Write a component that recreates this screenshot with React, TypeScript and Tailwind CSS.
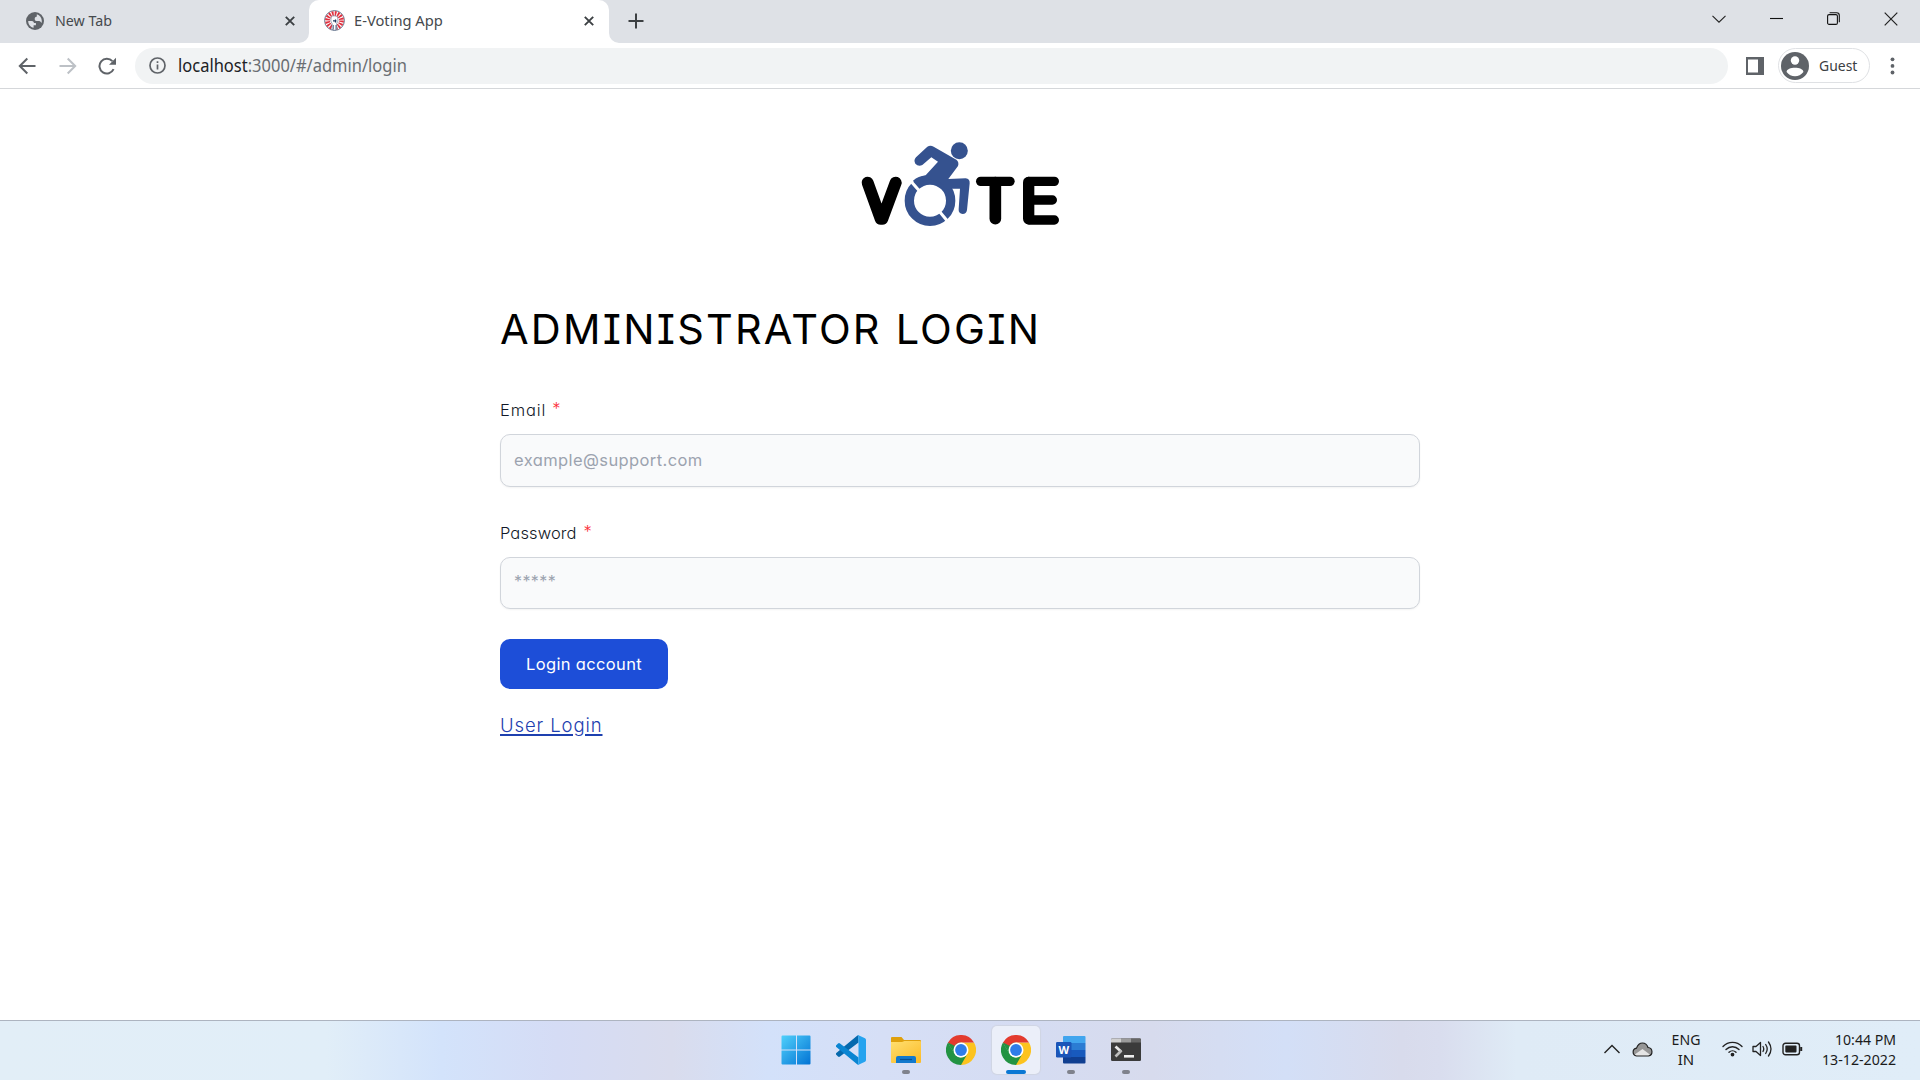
import React from "react";

const sen = "font-['Inter','Lato',sans-serif] [font-feature-settings:'cv08','cv11']";

function Close() {
  return (
    <svg width="10" height="10" viewBox="0 0 10 10" fill="none" stroke="#3c4043" strokeWidth="1.9">
      <path d="M.8.8 9.2 9.2M9.2.8.8 9.2" />
    </svg>
  );
}

function Favicon() {
  return (
    <svg width="21" height="21" viewBox="0 0 21 21">
      <circle cx="10.5" cy="10.5" r="9.9" fill="#fff" stroke="#52647f" strokeWidth=".9" />
      <circle cx="10.5" cy="10.5" r="7" fill="none" stroke="#e0313f" strokeWidth="4.8" strokeDasharray="1.7 1.05" />
      <path d="M7.2 7c.8-1.600 5.200-1.600 6.400.2l.4 3.800-1.400 2.600.4 5.600-2.500 1-2.600-1 .3-5.400-1.400-2.800z" fill="#fff" stroke="#5b6d8c" strokeWidth=".6" />
      <path d="M9 10.800h3.400M11.500 9.500v3" stroke="#1d355c" strokeWidth="1.200" />
      <path d="M9.300 15v4.300M12 15v4.300" stroke="#2a426a" strokeWidth=".8" />
    </svg>
  );
}

function TitleBar() {
  return (
    <div className="flex h-[43px] bg-[#dee1e6] text-[#45494d]">
      <div className="flex w-[309px] items-center pb-0.5 pl-[26px] pr-[14px]">
        <svg width="18" height="18" viewBox="0 0 18 18">
          <circle cx="9" cy="9" r="9" fill="#5f6368" />
          <path d="M2.2 8.9h3.5c1.8 0 2.2 1 2.2 2.2h2v2.2H7.6v2.4C4.4 15 2.2 12.300 2.200 8.900zM10.800 2.300c3 .8 5 3.600 5 6.700 0 .7-.1 1.300-.3 1.900-.8-1.600-2.100-1.900-3.500-1.900h-1.500c-1.200 0-1.800-.8-1.800-2.200 0-1.500 1-2 2.100-2z" fill="#dee1e6" />
        </svg>
        <span className="ml-[11px] flex-1 origin-left scale-x-[.95] text-[15px]">New Tab</span>
        <Close />
      </div>
      <div className="relative flex w-[300px] items-center rounded-t-[10px] bg-white pb-0.5 pl-[15px] pr-[15px]">
        <Favicon />
        <span className="ml-[9px] flex-1 origin-left scale-x-[.98] text-[15px]">E-Voting App</span>
        <Close />
        <svg className="absolute -left-[10px] bottom-0" width="10" height="10"><path d="M10 0v10H0A10 10 0 0 0 10 0z" fill="#fff" /></svg>
        <svg className="absolute -right-[10px] bottom-0" width="10" height="10"><path d="M0 0v10h10A10 10 0 0 1 0 0z" fill="#fff" /></svg>
      </div>
      <div className="flex flex-1 items-center pb-[1px] pl-[19px]">
        <svg width="16" height="16" viewBox="0 0 16 16" stroke="#3c4043" strokeWidth="2"><path d="M8 .5v15M.5 8h15" /></svg>
      </div>
      <div className="flex items-center gap-[44px] pb-[6px] pr-[22px]">
        <svg width="14" height="8" viewBox="0 0 14 8" fill="none" stroke="#222" strokeWidth="1.1"><path d="M.5.8 7 7.200 13.500.8" /></svg>
        <svg width="13" height="13" viewBox="0 0 13 13" stroke="#111" strokeWidth="1.1"><path d="M0 6.500h13" /></svg>
        <svg width="13" height="13" viewBox="0 0 13 13" fill="none" stroke="#111" strokeWidth="1.100"><rect x=".6" y="2.600" width="9.800" height="9.800" rx="1.500" /><path d="M2.600.7h7a2.700 2.700 0 0 1 2.700 2.700v6.800" /></svg>
        <svg width="14" height="14" viewBox="0 0 14 14" stroke="#222" strokeWidth="1.200"><path d="m.7.7 12.600 12.600M13.300.7.7 13.300" /></svg>
      </div>
    </div>
  );
}

function Toolbar() {
  return (
    <div className="flex h-[46px] items-center border-b border-[#d5d7da] bg-white pl-[18px] pr-[25px]">
      <svg width="18" height="18" viewBox="0 0 18 18" fill="none" stroke="#5f6368" strokeWidth="2"><path d="M17.500 9H2M9.300 1.500 1.800 9l7.500 7.500" /></svg>
      <svg className="ml-[23px]" width="18" height="18" viewBox="0 0 18 18" fill="none" stroke="#bdc1c6" strokeWidth="2"><path d="M.5 9H16M8.700 1.500 16.200 9l-7.500 7.500" /></svg>
      <svg className="ml-[21px]" width="19" height="18" viewBox="0 0 19 18"><path d="M15.600 12.200A7.400 7.400 0 1 1 14.400 4.200" fill="none" stroke="#5f6368" strokeWidth="2" /><path d="M18 .8v7h-7z" fill="#5f6368" /></svg>
      <div className="ml-[18px] flex h-9 w-[1593px] shrink-0 items-center rounded-full bg-[#f1f3f4] pl-[14px]">
        <svg width="17" height="17" viewBox="0 0 17 17" fill="none" stroke="#5f6368" strokeWidth="1.700"><circle cx="8.500" cy="8.500" r="7.500" /><path d="M8.500 7.500v5M8.500 4.200v1.800" /></svg>
        <span className="ml-[12px] origin-left scale-x-[.916] text-[18px] text-[#6a6e72]"><span className="text-[#202124]">localhost</span>:3000/#/admin/login</span>
      </div>
      <svg className="ml-[18px] shrink-0" width="18" height="18" viewBox="0 0 18 18"><path fillRule="evenodd" d="M0 0h18v18H0zM2 2.500v13h10v-13z" fill="#5f6368" /></svg>
      <div className="ml-[14px] flex h-[35px] w-[92px] shrink-0 items-center rounded-full border border-[#dfe1e4] pl-[2px]">
        <svg width="28" height="28" viewBox="0 0 28 28"><circle cx="14" cy="14" r="14" fill="#5f6368" /><circle cx="14" cy="8.500" r="4.200" fill="#fff" /><path d="M5.600 20c0-5.600 16.800-5.600 16.800 0-4 5.600-12.800 5.600-16.800 0z" fill="#fff" /></svg>
        <span className="ml-[10px] origin-left scale-x-[.93] pb-px text-[15px] text-[#3c4043]">Guest</span>
      </div>
      <svg className="ml-auto" width="5" height="18" viewBox="0 0 5 18" fill="#5f6368"><circle cx="2.500" cy="2.300" r="1.900" /><circle cx="2.500" cy="8.900" r="1.900" /><circle cx="2.500" cy="15.500" r="1.900" /></svg>
    </div>
  );
}

function VoteLogo() {
  return (
    <svg className="mx-auto block" width="240" height="110" viewBox="0 0 720 330" fill="none" strokeLinecap="round" strokeLinejoin="round">
      <path d="M83 158 122 266h5L167 158" stroke="#000" strokeWidth="36" />
      <path d="M422 154h88" stroke="#000" strokeWidth="28" />
      <path d="M466 158v108" stroke="#000" strokeWidth="35" />
      <path d="M643 154h-76M567 158v108M643 270h-76M567 210h70" stroke="#000" strokeWidth="28" />
      <path d="M566 157v109" stroke="#000" strokeWidth="34" />
      <g>
        <circle cx="270" cy="212" r="62" stroke="#35528f" strokeWidth="28" />
        <circle cx="358" cy="62" r="25.500" fill="#35528f" />
        <path d="M262 50Q271 44 281 50L349 89Q358 96 354 108L325 147L377 145Q390 147 389 160L381 240Q379 252 368 252Q355 251 356 238L360 176H335L322 178Q300 149 270 149Q245 150 233 168L219 152Q235 139 257 136L294 95L274 82L247 105Q235 111 226 101Q220 90 228 82Z" fill="#35528f" />
      </g>
      <path d="m214 155 27 31M299 245l25 30" stroke="#fff" strokeWidth="9" strokeLinecap="butt" />
    </svg>
  );
}

function Field({ label, labelClass, starClass, inputClass, placeholder, type }: { label: string; labelClass: string; starClass: string; inputClass: string; placeholder: string; type: string }) {
  return (
    <div>
      <label className="flex h-6 items-center text-[16.5px] font-[360] text-[#111827]">
        <span className={labelClass}>{label}</span><span className={starClass}>*</span>
      </label>
      <input
        type={type}
        placeholder={placeholder}
        className={`${inputClass} mt-3 block w-full rounded-[10px] border border-[#d1d5db] bg-[#f9fafb] px-[13px] font-[380] shadow-xs placeholder:text-[#9ca3af]`}
      />
    </div>
  );
}

function ChromeIcon() {
  return (
    <svg width="30" height="30" viewBox="0 0 30 30">
      <path d="M15 15V7.500h13A15 15 0 0 1 15 30z" fill="#fcc31e" />
      <path d="M2 7.500 8.500 18.750 15 15V7.500z" fill="#229342" />
      <path d="M2 7.500A15 15 0 0 0 15 30l6.500-11.250a7.500 7.500 0 0 1-13 0z" fill="#229342" />
      <path d="M2 7.500A15 15 0 0 1 28 7.500H15a7.500 7.500 0 0 0-6.500 3.750L8 15z" fill="#e33b2e" />
      <path d="M2 7.500 8.500 18.750 9 11z" fill="#229342" />
      <circle cx="15" cy="15" r="7.500" fill="#fff" />
      <circle cx="15" cy="15" r="5.900" fill="#2f7de9" />
    </svg>
  );
}

function WindowsIcon() {
  return (
    <svg width="30" height="30" viewBox="0 0 30 30">
      <defs><linearGradient id="win" x2="1" y2="1"><stop stopColor="#50d0fb" /><stop offset="1" stopColor="#0273d4" /></linearGradient></defs>
      <path d="M1.500.5H15v14H.5v-13a1 1 0 0 1 1-1zM16 .5h12.500a1 1 0 0 1 1 1v13H16zM.5 15.500H15v14H1.500a1 1 0 0 1-1-1zM16 15.500h13.500v13a1 1 0 0 1-1 1H16z" fill="url(#win)" />
    </svg>
  );
}

function CodeIcon() {
  return (
    <svg width="30" height="30" viewBox="0 0 30 30">
      <path d="M0 19.500l2 2q1 .8 2 0L22.500 7.500V.2q-1 0-1.700.8L.3 18q-.8.8-.3 1.500z" fill="#0569ad" />
      <path d="M0 10.500 2 8.500q1-.8 2 0L22.500 22.500v7.300q-1 0-1.700-.8L.3 12q-.8-.8-.3-1.500z" fill="#0a85d2" />
      <path d="M20.800 29.200c.8.800 1.400.7 2.200.4l6-2.900q1-.6 1-1.600V4.900q0-1-1-1.600L23 .4c-.8-.3-1.600-.2-2.200.6 1-.8 1.700-.2 1.700.8v26.400c0 1-.8 1.700-1.700 1z" fill="#25a3ef" />
    </svg>
  );
}

function FolderIcon() {
  return (
    <svg width="30" height="28" viewBox="0 0 30 28">
      <defs><linearGradient id="fold" x2=".8" y2="1"><stop stopColor="#ffdf70" /><stop offset="1" stopColor="#fcbd2b" /></linearGradient></defs>
      <path d="M0 2q0-1 1-1h9.500l2.500 3h16q1 0 1 1v6H0z" fill="#dfa00c" />
      <path d="M0 6h11l2.500-1H29q1 0 1 1v20q0 1-1 1H1q-1 0-1-1z" fill="url(#fold)" />
      <path d="M5 27v-5q0-2 2-2h16q2 0 2 2v5z" fill="#1279cd" /><path d="M9 23.500h12" stroke="#075094" strokeWidth="1.200" />
    </svg>
  );
}

function WordIcon() {
  return (
    <svg width="30" height="30" viewBox="0 0 30 30">
      <path d="M7 2q0-1 1-1h20.500q1 0 1 1v6H7z" fill="#41a5ee" /><path d="M7 8h22.500v7H7z" fill="#2b7cd3" /><path d="M7 15h22.500v7H7z" fill="#185abd" /><path d="M7 22h22.500v5.500q0 1-1 1H8q-1 0-1-1z" fill="#103f91" />
      <rect y="7" width="15.500" height="15.500" rx="1.200" fill="#1a55b8" />
      <text x="7.700" y="18.500" textAnchor="middle" fontFamily="Open Sans, sans-serif" fontWeight="700" fontSize="11" fill="#fff">W</text>
    </svg>
  );
}

function TerminalIcon() {
  return (
    <svg width="30" height="24" viewBox="0 0 30 24">
      <rect y=".5" width="30" height="22.500" rx="1.200" fill="#3b3b3b" />
      <path d="M0 4.500V1.700Q0 .5 1.200.5H10v4z" fill="#cfcfcf" /><path d="M10 .5h10v4H10z" fill="#9b9b9b" /><path d="M20 .5h8.800q1.200 0 1.200 1.200v2.800H20z" fill="#666" />
      <path d="m4.500 8.500 5.500 5" stroke="#e8e8e8" strokeWidth="2.700" /><path d="m10.500 12.500-6 6" stroke="#bdbdbd" strokeWidth="2.700" /><path d="M13 17h10v2.600H13z" fill="#eee" />
    </svg>
  );
}

function TaskItem({ children, mark }: { children: React.ReactNode; mark?: "open" | "active" }) {
  return (
    <div className={mark === "active" ? "relative flex h-12 w-12 items-center justify-center rounded-[5px] bg-[#ebeff9] shadow-[0_0_1px_1px_#d0d5e3]" : "relative flex h-12 w-12 items-center justify-center"}>
      {children}
      {mark && <span className={mark === "active" ? "absolute bottom-0 left-[14px] h-1 w-5 rounded-full bg-[#0a78d4]" : "absolute bottom-0 left-5 h-1 w-2 rounded-full bg-[#7f828c]"} />}
    </div>
  );
}

function Taskbar() {
  return (
    <div className="grid h-[60px] grid-cols-[1fr_auto_1fr] border-t border-[#adb4c0] bg-[linear-gradient(90deg,#e2eef7_0%,#e1eef8_17%,#d3e3fb_23%,#d5dcf5_29%,#d9dced_35%,#d3e1fa_40%,#d6dff6_46%,#d5dcf2_54%,#d7dbed_60%,#d3dff7_67%,#d8dbec_73%,#d9ddee_75%,#dfebf6_79%,#e0edf8_100%)]">
      <span />
      <div className="flex gap-[7px] pl-[2px] pt-[5px]">
        <TaskItem><WindowsIcon /></TaskItem>
        <TaskItem><CodeIcon /></TaskItem>
        <TaskItem mark="open"><FolderIcon /></TaskItem>
        <TaskItem><ChromeIcon /></TaskItem>
        <TaskItem mark="active"><ChromeIcon /></TaskItem>
        <TaskItem mark="open"><WordIcon /></TaskItem>
        <TaskItem mark="open"><TerminalIcon /></TaskItem>
      </div>
      <div className="flex items-center justify-end pb-[3px] pr-6 text-[15px] leading-5 text-[#1b1b1b]">
        <svg width="16" height="10" viewBox="0 0 16 10" fill="none" stroke="#222" strokeWidth="1.400"><path d="m.5 9 7.500-7.500L15.500 9" /></svg>
        <svg className="ml-3" width="21" height="15" viewBox="0 0 21 15"><path d="M4.500 14a4 4 0 0 1 0-7.900C6 2.200 8 1 10.500 1S15 2.500 16 5.500a4.300 4.300 0 0 1 .5 8.500z" fill="#969696" /><path d="M2 13 10.500 7l8 6q-1 1-2 1h-12q-1.500 0-2.500-1z" fill="#e5e5e5" /><path d="M4.500 14a4 4 0 0 1 0-7.900C6 2.200 8 1 10.500 1S15 2.500 16 5.500a4.300 4.300 0 0 1 .5 8.500z" fill="none" stroke="#222" strokeWidth="1.200" /></svg>
        <div className="ml-[18px] w-[30px] text-center"><div className="-mx-2 scale-x-[.94]">ENG</div><div>IN</div></div>
        <svg className="ml-[21px]" width="21" height="16" viewBox="0 0 21 16" fill="none" stroke="#222" strokeWidth="1.400" strokeLinecap="round"><path d="M1 5.600c5.200-5.600 13.800-5.600 19 0M4 8.600c3.700-3.800 9.300-3.800 13 0M7 11.300c2-1.900 5-1.900 7 0" /><circle cx="10.500" cy="13.600" r="1.200" fill="#222" /></svg>
        <svg className="ml-[9px]" width="21" height="18" viewBox="0 0 21 18" fill="none" stroke="#222" strokeWidth="1.300" strokeLinejoin="round" strokeLinecap="round"><path d="M1 6.500h3l4.500-4v13L4 11.500H1zM11 6.500q1.500 2.500 0 5M13.700 4.500q3 4.500 0 9M16.500 2q5 7 0 14" /></svg>
        <svg className="ml-[9px]" width="21" height="14" viewBox="0 0 21 14" fill="none" stroke="#222" strokeWidth="1.400"><rect x="1" y="1.300" width="16.500" height="11.400" rx="2.500" /><rect x="3.300" y="3.600" width="11.200" height="6.800" rx=".8" fill="#222" stroke="none" /><path d="M19.200 5v4" strokeWidth="2" /></svg>
        <div className="ml-[18px] w-[75px] whitespace-nowrap text-right"><div className="origin-right scale-x-[.94]">10:44 PM</div><div className="-ml-4 origin-right scale-x-[.945]">13-12-2022</div></div>
      </div>
    </div>
  );
}

export default function App() {
  return (
    <div className="flex h-screen flex-col overflow-hidden bg-white font-['Noto_Sans',sans-serif]">
      <TitleBar />
      <Toolbar />
      <main className={`${sen} mx-auto w-[920px] flex-1 pt-[41px]`}>
        <VoteLogo />
        <h1 className="mt-[59px] whitespace-nowrap text-[41.5px] font-[370] leading-[60px] tracking-[2.2px] text-black">ADMINISTRATOR LOGIN</h1>
        <form className="mt-[39px]">
          <Field label="Email" type="text" placeholder="example@support.com" labelClass="tracking-[0.9px]" starClass="ml-[6px] pb-[3px] text-red-500" inputClass="h-[53px] pb-0.5 text-[16.5px] tracking-[0.4px]" />
          <div className="mt-[34px]">
            <Field label="Password" type="password" placeholder="*****" labelClass="tracking-[0.1px]" starClass="ml-[7px] pb-[3px] text-red-500" inputClass="h-[52px] pb-1 text-[16px] tracking-[0.4px]" />
          </div>
          <button type="button" className="mt-[30px] block h-[50px] w-[168px] rounded-[10px] bg-[#1d4ed8] text-[16.5px] tracking-[0.35px] text-white">Login account</button>
          <a className="mt-[22px] inline-block text-[18.5px] font-[340] leading-7 tracking-[0.9px] text-[#1e40af] underline decoration-2 underline-offset-2">User Login</a>
        </form>
      </main>
      <Taskbar />
    </div>
  );
}
